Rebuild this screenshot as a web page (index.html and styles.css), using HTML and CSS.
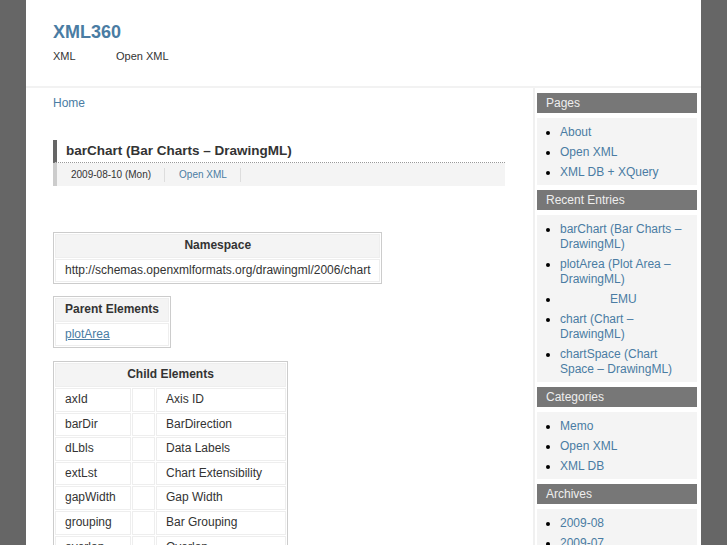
FILE: index.html
```html
<!DOCTYPE html>
<html>
<head>
<meta charset="utf-8">
<title>barChart (Bar Charts – DrawingML) | XML360</title>
<link rel="stylesheet" href="styles.css">
</head>
<body>
<div class="page">
  <header class="site-header">
    <h1 class="site-title">XML360</h1>
    <nav class="site-nav">
      <a class="nav-item" href="#">XML</a>
      <a class="nav-item" href="#">Open XML</a>
    </nav>
  </header>
  <div class="layout">
    <main class="main">
      <div class="breadcrumb"><a href="#">Home</a></div>
      <article class="entry">
        <h2 class="entry-title">barChart (Bar Charts – DrawingML)</h2>
        <div class="entry-meta">
          <span class="meta-item">2009-08-10 (Mon)</span>
          <span class="meta-item"><a href="#">Open XML</a></span>
        </div>
        <div class="entry-body">
          <table class="info">
            <tr><th>Namespace</th></tr>
            <tr><td>http://schemas.openxmlformats.org/drawingml/2006/chart</td></tr>
          </table>
          <table class="info parent">
            <tr><th>Parent Elements</th></tr>
            <tr><td><a class="ul" href="#">plotArea</a></td></tr>
          </table>
          <table class="info child">
            <tr><th colspan="3">Child Elements</th></tr>
            <tr><td class="c1">axId</td><td class="c2"></td><td class="c3">Axis ID</td></tr>
            <tr><td class="c1">barDir</td><td class="c2"></td><td class="c3">BarDirection</td></tr>
            <tr><td class="c1">dLbls</td><td class="c2"></td><td class="c3">Data Labels</td></tr>
            <tr><td class="c1">extLst</td><td class="c2"></td><td class="c3">Chart Extensibility</td></tr>
            <tr><td class="c1">gapWidth</td><td class="c2"></td><td class="c3">Gap Width</td></tr>
            <tr><td class="c1">grouping</td><td class="c2"></td><td class="c3">Bar Grouping</td></tr>
            <tr><td class="c1">overlap</td><td class="c2"></td><td class="c3">Overlap</td></tr>
            <tr><td class="c1">serLines</td><td class="c2"></td><td class="c3">Series Lines</td></tr>
          </table>
        </div>
      </article>
    </main>
    <aside class="sidebar">
      <section class="widget">
        <h3 class="widget-title">Pages</h3>
        <ul class="widget-list">
          <li><a href="#">About</a></li>
          <li><a href="#">Open XML</a></li>
          <li><a href="#">XML DB + XQuery</a></li>
        </ul>
      </section>
      <section class="widget">
        <h3 class="widget-title">Recent Entries</h3>
        <ul class="widget-list">
          <li><a href="#">barChart (Bar Charts – DrawingML)</a></li>
          <li><a href="#">plotArea (Plot Area – DrawingML)</a></li>
          <li><a href="#"><span class="blank"></span>EMU</a></li>
          <li><a href="#">chart (Chart – DrawingML)</a></li>
          <li><a href="#">chartSpace (Chart Space – DrawingML)</a></li>
        </ul>
      </section>
      <section class="widget">
        <h3 class="widget-title">Categories</h3>
        <ul class="widget-list">
          <li><a href="#">Memo</a></li>
          <li><a href="#">Open XML</a></li>
          <li><a href="#">XML DB</a></li>
        </ul>
      </section>
      <section class="widget">
        <h3 class="widget-title">Archives</h3>
        <ul class="widget-list">
          <li><a href="#">2009-08</a></li>
          <li><a href="#">2009-07</a></li>
        </ul>
      </section>
    </aside>
  </div>
</div>
</body>
</html>
```
FILE: styles.css
```css
html, body {
  margin: 0;
  padding: 0;
  height: 100%;
  overflow: hidden;
}
body {
  background: #666;
  font-family: "Liberation Sans", Arial, sans-serif;
  font-size: 12px;
  color: #333;
}
a {
  color: #4a7ca3;
  text-decoration: none;
}
.page {
  width: 675px;
  margin: 0 auto;
  background: #fff;
  min-height: 100%;
}
.site-header {
  padding-left: 27px;
  border-bottom: 2px solid #f2f2f2;
  box-sizing: border-box;
  height: 88px;
}
.site-title {
  margin: 0;
  padding-top: 22px;
  font-size: 18px;
  line-height: 20px;
  font-weight: bold;
  color: #4a7ca3;
}
.site-nav {
  display: flex;
  margin-top: 7px;
  font-size: 11px;
  line-height: 14px;
}
.nav-item {
  color: #333;
  width: 63px;
}
.layout {
  display: flex;
}
.main {
  width: 452px;
  padding: 7px 28px 0 27px;
  border-right: 2px solid #f0f0f0;
}
.breadcrumb {
  line-height: 16px;
  font-size: 12px;
}
.entry {
  margin-top: 29px;
}
.entry-title {
  margin: 0;
  border-left: 4px solid #666;
  padding-left: 9px;
  font-size: 13.5px;
  line-height: 22px;
  font-weight: bold;
  color: #333;
  border-bottom: 1px dotted #999;
}
.entry-meta {
  display: flex;
  align-items: center;
  height: 23px;
  background: #f4f4f4;
  border-left: 4px solid #ccc;
  font-size: 10px;
  color: #333;
}
.meta-item {
  padding: 0 13px 0 14px;
  border-right: 1px solid #ddd;
  line-height: 14px;
}
.meta-item + .meta-item {
  padding-left: 14px;
}
.entry-body {
  padding-top: 46px;
}
.info {
  border: 1px solid #ccc;
  border-spacing: 1px;
  margin-bottom: 12px;
  font-size: 12px;
  color: #333;
}
.info.parent {
  margin-bottom: 13px;
}
.info th, .info td {
  border: 1px solid #eee;
  padding: 4px 9px;
  line-height: 13.6px;
  height: 13.6px;
  text-align: left;
}
.info th {
  background: #f4f4f4;
  text-align: center;
  font-weight: bold;
}
.info .ul {
  text-decoration: underline;
}
.child .c1 { width: 56px; }
.child .c2 { width: 3px; }
.child .c3 { width: 110px; }
.sidebar {
  width: 160px;
  padding: 5px 4px 0 2px;
}
.widget {
  margin-bottom: 5px;
}
.widget-title {
  margin: 0 0 5px;
  background: #777;
  color: #eee;
  font-size: 12px;
  font-weight: normal;
  line-height: 20px;
  padding-left: 9px;
}
.widget-list {
  margin: 0;
  background: #f4f4f4;
  padding: 7px 14px 5px 23px;
  list-style: disc;
  color: #000;
}
.widget-list li {
  line-height: 15px;
  margin-bottom: 5px;
}
.widget-list li:last-child {
  margin-bottom: 0;
}
.blank {
  display: inline-block;
  width: 50px;
}
```
